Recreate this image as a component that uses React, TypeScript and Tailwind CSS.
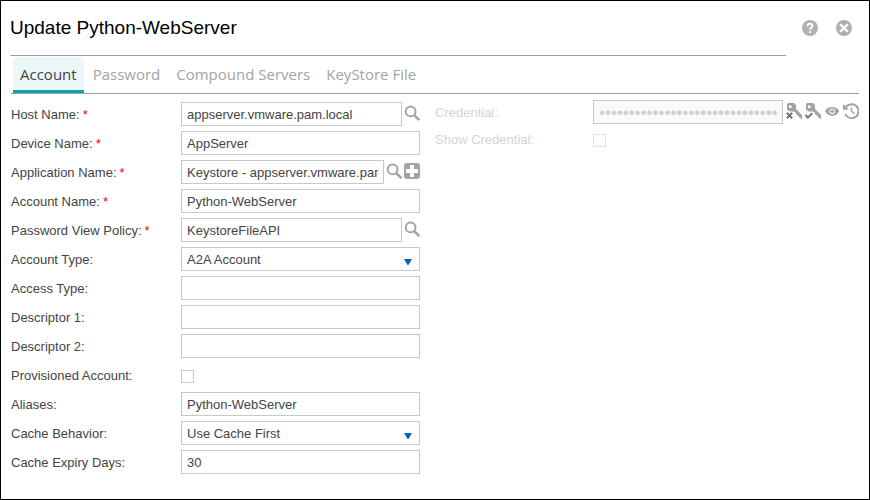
import React, { useState } from "react";

type Icon = "search" | "add";

interface Field {
  id: string;
  label: string;
  kind?: "text" | "select" | "checkbox";
  value?: string;
  required?: boolean;
  icons?: Icon[];
}

const fields: Field[] = [
  { id: "host", label: "Host Name:", value: "appserver.vmware.pam.local", required: true, icons: ["search"] },
  { id: "device", label: "Device Name:", value: "AppServer", required: true },
  { id: "application", label: "Application Name:", value: "Keystore - appserver.vmware.pam.local", required: true, icons: ["search", "add"] },
  { id: "account", label: "Account Name:", value: "Python-WebServer", required: true },
  { id: "policy", label: "Password View Policy:", value: "KeystoreFileAPI", required: true, icons: ["search"] },
  { id: "account-type", label: "Account Type:", kind: "select", value: "A2A Account" },
  { id: "access-type", label: "Access Type:", value: "" },
  { id: "descriptor-1", label: "Descriptor 1:", value: "" },
  { id: "descriptor-2", label: "Descriptor 2:", value: "" },
  { id: "provisioned", label: "Provisioned Account:", kind: "checkbox" },
  { id: "aliases", label: "Aliases:", value: "Python-WebServer" },
  { id: "cache", label: "Cache Behavior:", kind: "select", value: "Use Cache First" },
  { id: "expiry", label: "Cache Expiry Days:", value: "30" },
];

const tabs = ["Account", "Password", "Compound Servers", "KeyStore File"];

const boxClass = "h-6 w-full min-w-0 flex-1 rounded-none border border-[#c8c8c8] bg-white px-[5px] text-[13px] text-[#444] outline-none";
const checkClass = "mt-0.5 size-[13px] appearance-none border border-[#c8c8c8] bg-white checked:bg-[#00a5b5]";

function IconButton({ label, children }: { label: string; children: React.ReactNode }) {
  return (
    <button type="button" aria-label={label} className="shrink-0 pb-0.5">
      {children}
    </button>
  );
}

function SearchIcon() {
  return (
    <svg viewBox="0 0 16 16" className="size-4" fill="none" stroke="#a3a3a3">
      <circle cx="6.6" cy="6.4" r="4.9" strokeWidth="2" />
      <path d="M10 10 15.4 15" strokeWidth="2.4" />
    </svg>
  );
}

function AddIcon() {
  return (
    <svg viewBox="0 0 16 16" className="size-4">
      <rect width="16" height="16" rx="3" fill="#a3a3a3" />
      <path d="M6 2h4v4h4v4h-4v4H6v-4H2V6h4z" fill="#fff" />
    </svg>
  );
}

function KeyShape() {
  return (
    <path
      fillRule="evenodd"
      fill="#a3a3a3"
      d="M2 0h6l2 2v4l6 6v4h-1.5v-1.5H13V13h-1.5v-1.5H10V10L8 8.5H3.500L1 6.500V1zM3 2.500v2.500h2.500V2.500z"
    />
  );
}

function KeyCrossIcon() {
  return (
    <svg viewBox="0 0 16 16" className="size-4">
      <KeyShape />
      <path d="M.8 9.8 6.2 15.2M6.2 9.8.8 15.2" stroke="#747474" strokeWidth="2" />
    </svg>
  );
}

function KeyCheckIcon() {
  return (
    <svg viewBox="0 0 16 16" className="size-4">
      <KeyShape />
      <path d="M.6 12 2.8 14.6 7.2 10.2" stroke="#747474" strokeWidth="2" fill="none" />
    </svg>
  );
}

function EyeIcon() {
  return (
    <svg viewBox="0 0 16 16" className="size-4">
      <path d="M1 8.2Q3.5 4 8.2 4t7 4.2q-2.5 4.6-7 4.6T1 8.2z" fill="#a3a3a3" />
      <circle cx="8.2" cy="8.3" r="2.8" fill="#fff" />
      <circle cx="8.2" cy="8.3" r="1.8" fill="#a3a3a3" />
    </svg>
  );
}

function HistoryIcon() {
  return (
    <svg viewBox="0 0 16 16" className="size-4" fill="none" stroke="#a3a3a3">
      <path d="M2.6 4.6A7 7 0 1 1 2.2 11" strokeWidth="1.9" />
      <path d="M0 1v5.8h6z" fill="#a3a3a3" stroke="none" />
      <path d="M8.5 4.2v4l3 2.6" strokeWidth="1.4" />
    </svg>
  );
}

function HelpIcon() {
  return (
    <svg viewBox="0 0 16 16" className="size-4">
      <circle cx="8" cy="8" r="8" fill="#b1b1b1" />
      <path d="M5.6 6.2Q5.6 3.8 8 3.8t2.4 2.2Q10.4 7.3 9 8 8 8.5 8 9.8" fill="none" stroke="#fff" strokeWidth="2" />
      <path d="M7 11h2v2H7z" fill="#fff" />
    </svg>
  );
}

function CloseIcon() {
  return (
    <svg viewBox="0 0 16 16" className="size-4">
      <circle cx="8" cy="8" r="8" fill="#b1b1b1" />
      <path d="M4.2 4.2l7.6 7.6M11.8 4.2l-7.6 7.6" stroke="#fff" strokeWidth="2.2" />
    </svg>
  );
}

function FieldControl({ field }: { field: Field }) {
  if (field.kind === "checkbox") {
    return <input id={field.id} type="checkbox" className={checkClass} />;
  }
  if (field.kind === "select") {
    return (
      <div className="relative flex flex-1">
        <select id={field.id} className={`${boxClass} appearance-none pt-0.5`}>
          <option>{field.value}</option>
        </select>
        <svg viewBox="0 0 8 6" className="pointer-events-none absolute right-2 bottom-1.5 h-1.5 w-2">
          <path d="M0 0h8L4.400 6h-.8z" fill="#0065b3" />
        </svg>
      </div>
    );
  }
  return <input id={field.id} type="text" defaultValue={field.value} className={boxClass} />;
}

function FieldRow({ field }: { field: Field }) {
  return (
    <div className="flex h-6 items-center">
      <label htmlFor={field.id} className="w-[170px] shrink-0 pt-0.5">
        {field.label}
        {field.required && <span className="ml-[3px] text-[#f00]">*</span>}
      </label>
      <div className="flex min-w-0 flex-1 items-center gap-0.5">
        <FieldControl field={field} />
        {field.icons?.map((icon) => (
          <IconButton key={icon} label={icon}>
            {icon === "search" ? <SearchIcon /> : <AddIcon />}
          </IconButton>
        ))}
      </div>
    </div>
  );
}

export default function App() {
  const [active, setActive] = useState("Account");
  return (
    <main className="min-h-screen border border-black bg-white font-['Liberation_Sans',Arial,sans-serif] text-[13px] text-[#444]">
      <header className="flex h-[55px] pl-[9px]">
        <h1 className="flex flex-1 items-center border-b border-[#a0a0a0] text-[19px] text-black">
          Update Python-WebServer
        </h1>
        <div className="flex items-center gap-[18px] pr-[17px] pl-4">
          <IconButton label="Help"><HelpIcon /></IconButton>
          <IconButton label="Close"><CloseIcon /></IconButton>
        </div>
      </header>

      <nav role="tablist" className="mx-[10px] flex h-[38px] gap-0.5 border-b border-[#a0a0a0] px-0.5 pt-px font-['Open_Sans','Noto_Sans',sans-serif] text-[15px]">
        {tabs.map((tab) => (
          <button
            key={tab}
            type="button"
            role="tab"
            aria-selected={tab === active}
            onClick={() => setActive(tab)}
            className={`rounded-t border-b-[3px] px-[7px] pt-0.5 ${
              tab === active ? "border-[#00a5b5] bg-[#ebf7f9] text-[#444]" : "border-transparent text-[#a3a3a3]"
            }`}
          >
            {tab}
          </button>
        ))}
      </nav>

      <form className="mx-[10px] flex gap-[15px] pb-6">
        <div className="flex w-[409px] shrink-0 flex-col gap-[5px] pt-2">
          {fields.map((field) => (
            <FieldRow key={field.id} field={field} />
          ))}
        </div>

        <div className="flex min-w-0 flex-1 flex-col gap-1 pt-1.5 text-[#d4d4d4]">
          <div className="flex h-6 items-center">
            <label htmlFor="credential" className="w-[158px] shrink-0 pt-0.5">Credential:</label>
            <div className="flex min-w-0 flex-1 items-center gap-[3px]">
              <input
                id="credential"
                type="password"
                disabled
                defaultValue="00000000000000000000000000000000"
                className="h-6 w-full min-w-0 flex-1 border border-[#c8c8c8] bg-[#fafafa] px-[5px] pt-0.5 text-[17px] text-[#cfcfcf]"
              />
              <IconButton label="Credential not verified"><KeyCrossIcon /></IconButton>
              <IconButton label="Credential verified"><KeyCheckIcon /></IconButton>
              <IconButton label="View credential"><EyeIcon /></IconButton>
              <IconButton label="Credential history"><HistoryIcon /></IconButton>
            </div>
          </div>
          <div className="flex h-6 items-center">
            <label htmlFor="show-credential" className="w-[158px] shrink-0">Show Credential:</label>
            <input id="show-credential" type="checkbox" disabled className="size-[13px] appearance-none border border-[#e2e2e2] bg-white" />
          </div>
        </div>
      </form>
    </main>
  );
}
